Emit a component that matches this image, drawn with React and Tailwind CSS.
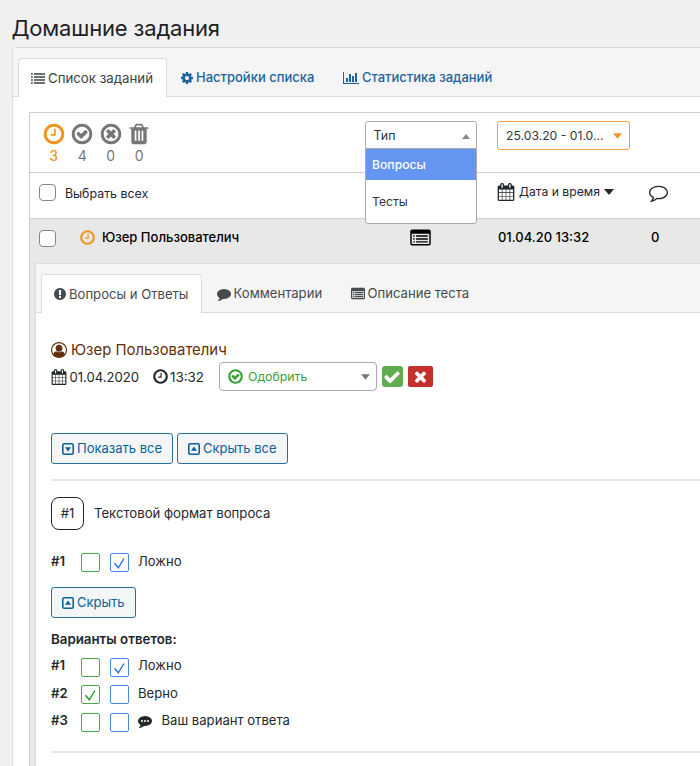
/*
 * Homework admin page
 * -------------------
 * List of submitted tasks with a status filter, a type dropdown and the
 * expanded answer details of a single student.
 */

import clsx from 'clsx'

const RING =
  'M1440 896q0-148-73-273t-198-198-273-73-273 73-198 198-73 273 73 273 198 198 273 73 273-73 198-198 73-273zm224 0q0 209-103 385.5t-279.5 279.5-385.5 103-385.5-103-279.5-279.5-103-385.5 103-385.5 279.5-279.5 385.5-103 385.5 103 279.5 279.5 103 385.5z'

const BUBBLE =
  'M1792 896q0 174-120 321.5t-326 233-450 85.5q-70 0-145-8-198 175-460 242-49 14-114 22-17 2-30.5-9t-17.5-29v-1q-3-4-.5-12t2-10 4.5-9.5l6-9 7-8.5 8-9q7-8 31-34.5t34.5-38 31-39.5 32.5-51 27-59 26-76q-157-89-247.5-220t-90.5-281q0-130 71-248.5t191-204.5 286-136.5 348-50.5q244 0 450 85.5t326 233 120 321.5z'

const PATHS = {
  clock:
    'M1024 544v448q0 14-9 23t-23 9h-320q-14 0-23-9t-9-23v-64q0-14 9-23t23-9h224v-352q0-14 9-23t23-9h64q14 0 23 9t9 23z' + RING,
  checkCircle:
    'M1299 813l-422 422q-19 19-45 19t-45-19l-294-294q-19-19-19-45t19-45l102-102q19-19 45-19t45 19l147 147 275-275q19-19 45-19t45 19l102 102q19 19 19 45t-19 45z' + RING,
  timesCircle:
    'M1257 1113l-146 146q-10 10-23 10t-23-10l-169-169-169 169q-10 10-23 10t-23-10l-146-146q-10-10-10-23t10-23l169-169-169-169q-10-10-10-23t10-23l146-146q10-10 23-10t23 10l169 169 169-169q10-10 23-10t23 10l146 146q10 10 10 23t-10 23l-169 169 169 169q10 10 10 23t-10 23z' + RING,
  trash:
    'M704 1376v-704q0-14-9-23t-23-9h-64q-14 0-23 9t-9 23v704q0 14 9 23t23 9h64q14 0 23-9t9-23zm256 0v-704q0-14-9-23t-23-9h-64q-14 0-23 9t-9 23v704q0 14 9 23t23 9h64q14 0 23-9t9-23zm256 0v-704q0-14-9-23t-23-9h-64q-14 0-23 9t-9 23v704q0 14 9 23t23 9h64q14 0 23-9t9-23zm-544-992h448l-48-117q-7-9-17-11h-317q-10 2-17 11zm928 32v64q0 14-9 23t-23 9h-96v948q0 83-47 143.5t-113 60.5h-832q-66 0-113-58.5t-47-141.5v-952h-96q-14 0-23-9t-9-23v-64q0-14 9-23t23-9h309l70-167q15-37 54-63t79-26h320q40 0 79 26t54 63l70 167h309q14 0 23 9t9 23z',
  calendar:
    'M192 1664h288v-288h-288v288zm352 0h320v-288h-320v288zm-352-352h288v-320h-288v320zm352 0h320v-320h-320v320zm-352-384h288v-288h-288v288zm736 736h320v-288h-320v288zm-384-736h320v-288h-320v288zm768 736h288v-288h-288v288zm-384-352h320v-320h-320v320zm-352-864v-288q0-13-9.5-22.5t-22.5-9.5h-64q-13 0-22.5 9.5t-9.5 22.5v288q0 13 9.5 22.5t22.5 9.5h64q13 0 22.5-9.5t9.5-22.5zm736 864h288v-320h-288v320zm-384-384h320v-288h-320v288zm384 0h288v-288h-288v288zm32-480v-288q0-13-9.5-22.5t-22.5-9.5h-64q-13 0-22.5 9.5t-9.5 22.5v288q0 13 9.5 22.5t22.5 9.5h64q13 0 22.5-9.5t9.5-22.5zm384-64v1280q0 52-38 90t-90 38h-1408q-52 0-90-38t-38-90v-1280q0-52 38-90t90-38h128v-96q0-66 47-113t113-47h64q66 0 113 47t47 113v96h384v-96q0-66 47-113t113-47h64q66 0 113 47t47 113v96h128q52 0 90 38t38 90z',
  list:
    'M0 1304h224v208h-224zM0 920h224v208h-224zM0 536h224v208h-224zM0 152h224v208h-224zM384 1304h1408v208h-1408zM384 920h1408v208h-1408zM384 536h1408v208h-1408zM384 152h1408v208h-1408z',
  cog:
    'M1152 896q0-106-75-181t-181-75-181 75-75 181 75 181 181 75 181-75 75-181zm512-109v222q0 12-8 23t-20 13l-185 28q-19 54-39 91 35 50 107 138 10 12 10 25t-9 23q-27 37-99 108t-94 71q-12 0-26-9l-138-108q-44 23-91 38-16 136-29 186-7 28-36 28h-222q-14 0-24.5-8.5t-11.5-21.5l-28-184q-49-16-90-37l-141 107q-10 9-25 9-14 0-25-11-126-114-165-168-7-10-7-23 0-12 8-23 15-21 51-66.5t54-70.5q-27-50-41-99l-183-27q-13-2-21-12.5t-8-23.5v-222q0-12 8-23t19-13l186-28q14-46 39-92-40-57-107-138-10-12-10-24 0-10 9-23 26-36 98.5-107.5t94.5-71.5q13 0 26 10l138 107q44-23 91-38 16-136 29-186 7-28 36-28h222q14 0 24.5 8.5t11.5 21.5l28 184q49 16 90 37l142-107q9-9 24-9 13 0 25 10 129 119 165 170 7 8 7 22 0 12-8 23-15 21-51 66.5t-54 70.5q26 50 41 98l183 28q13 2 21 12.5t8 23.5z',
  chart:
    'M640 896v512h-256v-512h256zm384-512v1024h-256v-1024h256zm1024 1152v128h-2048v-1536h128v1408h1920zm-640-896v768h-256v-768h256zm384-384v1152h-256v-1152h256z',
  comment: BUBBLE,
  commentOutline:
    'M896 384q-204 0-381.5 69.5t-282 187.5-104.5 255q0 112 71.5 213.5t201.5 175.5l87 50-27 96q-24 91-70 172 152-63 275-171l43-38 57 6q69 8 130 8 204 0 381.5-69.5t282-187.5 104.5-255-104.5-255-282-187.5-381.5-69.5z' + BUBBLE,
  commentDots:
    BUBBLE +
    'M384 896a128 128 0 1 0 256 0a128 128 0 1 0-256 0zM768 896a128 128 0 1 0 256 0a128 128 0 1 0-256 0zM1152 896a128 128 0 1 0 256 0a128 128 0 1 0-256 0z',
  exclamation:
    'M896 128q209 0 385.5 103t279.5 279.5 103 385.5-103 385.5-279.5 279.5-385.5 103-385.5-103-279.5-279.5-103-385.5 103-385.5 279.5-279.5 385.5-103zm128 1247v-190q0-14-9-23.5t-22-9.5h-192q-13 0-23 10t-10 23v190q0 13 10 23t23 10h192q13 0 22-9.5t9-23.5zm-2-344l18-621q0-12-10-18-10-8-24-8h-220q-14 0-24 8-10 6-10 18l17 621q0 10 10 17.5t24 7.5h185q14 0 23.5-7.5t10.5-17.5z',
  listAlt:
    'M160 128h1472q160 0 160 160v1088q0 160-160 160h-1472q-160 0-160-160v-1088q0-160 160-160zM128 512v864q0 32 32 32h1472q32 0 32-32v-864zM256 640h128v128h-128zM256 896h128v128h-128zM256 1152h128v128h-128zM512 640h1024v128h-1024zM512 896h1024v128h-1024zM512 1152h1024v128h-1024z',
  user:
    'M896 0q182 0 348 71t286 191 191 286 71 348q0 181-70.5 347t-190.5 286-286 191.5-349 71.5-349-71-285.5-191.5-190.5-286-71-347.5 71-348 191-286 286-191 348-71zm619 1351q149-205 149-455 0-156-61-298t-164-245-245-164-298-61-298 61-245 164-164 245-61 298q0 250 149 455 66-327 306-327 131 128 313 128t313-128q240 0 306 327zm-235-647q0-159-112.5-271.5t-271.5-112.5-271.5 112.5-112.5 271.5 112.5 271.5 271.5 112.5 271.5-112.5 112.5-271.5z',
  squareDown:
    'M416 128h960q288 0 288 288v960q0 288-288 288h-960q-288 0-288-288v-960q0-288 288-288zM416 330q-86 0-86 86v960q0 86 86 86h960q86 0 86-86v-960q0-86-86-86zM512 672h768l-384 544z',
  squareUp:
    'M416 128h960q288 0 288 288v960q0 288-288 288h-960q-288 0-288-288v-960q0-288 288-288zM416 330q-86 0-86 86v960q0 86 86 86h960q86 0 86-86v-960q0-86-86-86zM512 1120h768l-384-544z',
  check:
    'M1671 566q0 40-28 68l-724 724-136 136q-28 28-68 28t-68-28l-136-136-362-362q-28-28-28-68t28-68l136-136q28-28 68-28t68 28l294 295 656-657q28-28 68-28t68 28l136 136q28 28 28 68z',
  times:
    'M1490 1322q0 40-28 68l-136 136q-28 28-68 28t-68-28l-294-294-294 294q-28 28-68 28t-68-28l-136-136q-28-28-28-68t28-68l294-294-294-294q-28-28-28-68t28-68l136-136q28-28 68-28t68 28l294 294 294-294q28-28 68-28t68 28l136 136q28 28 28 68t-28 68l-294 294 294 294q28 28 28 68z',
}

function Icon({ name, box = '0 0 1792 1792', className }) {
  return (
    <svg viewBox={box} fill="currentColor" fillRule="evenodd" className={clsx('shrink-0', className)}>
      <path d={PATHS[name]} />
    </svg>
  )
}

function Caret({ up, className }) {
  return (
    <svg viewBox="0 0 10 6" fill="currentColor" className={clsx('shrink-0', className)}>
      <path d={up ? 'M0 6L5 0L10 6z' : 'M0 0L5 6L10 0z'} />
    </svg>
  )
}

const filters = [
  { icon: 'clock', count: 3, active: true },
  { icon: 'checkCircle', count: 4 },
  { icon: 'timesCircle', count: 0 },
  { icon: 'trash', count: 0 },
]

const answers = [
  { num: '#1', right: false, chosen: true, text: 'Ложно' },
  { num: '#2', right: true, chosen: false, text: 'Верно' },
  { num: '#3', right: false, chosen: false, text: 'Ваш вариант ответа', custom: true },
]

function SelectBox() {
  return <span className="block size-[17px] rounded-[4px] border border-[#7e8993] bg-white" />
}

function Mark({ checked, className }) {
  return (
    <span className={clsx('flex size-[19px] items-center justify-center rounded-[2px] border', className)}>
      {checked && (
        <svg viewBox="0 0 19 19" fill="none" stroke="currentColor" strokeWidth="1.4" className="size-[19px] shrink-0">
          <path d="M4.5 10.2L8.3 14.8L14 5.5" />
        </svg>
      )}
    </span>
  )
}

function Answer({ num, right, chosen, text, custom }) {
  return (
    <div className="flex h-[27.5px] items-center">
      <span className="w-[30px] text-[13.2px] font-semibold">{num}</span>
      <Mark checked={right} className="mt-[2px] border-[#4ba84f] text-[#249a2c]" />
      <Mark checked={chosen} className="mt-[2px] ml-[9.5px] border-[#4a86e8] text-[#2b6fe0]" />
      {custom && <Icon name="commentDots" className="ml-[9px] size-[14px]" />}
      <span className={clsx('text-[13.1px]', custom ? 'ml-[10px]' : 'ml-[9.5px]')}>{text}</span>
    </div>
  )
}

function BlueButton({ icon, className, children }) {
  return (
    <button
      type="button"
      className={clsx(
        'flex h-[31px] items-center gap-[2px] rounded-[3px] border border-[#2271a1] bg-[#f3f5f6] pt-px pl-[9px] text-[13px] text-[#0b6199]',
        className
      )}
    >
      <Icon name={icon} className="size-[14px]" />
      <span>{children}</span>
    </button>
  )
}

function PageTabs() {
  return (
    <nav className="flex h-[49px] rounded-tl-[4px] border-b border-[#dcdcdc] bg-[#f5f5f5] pl-[5px]">
      <div className="mt-[10px] flex h-[39px] w-[149px] items-center rounded-t-[4px] border border-b-0 border-[#dcdcdc] bg-white pl-[12px] text-[13.25px] text-[#3c4146]">
        <Icon name="list" box="0 0 1792 1664" className="h-[13px] w-[14px]" />
        <span className="ml-[3px] pt-px">Список заданий</span>
      </div>
      <div className="mt-[10px] ml-[13px] flex h-[39px] w-[163px] items-center text-[13px] font-medium text-[#1b659b]">
        <Icon name="cog" className="size-[14px]" />
        <span className="ml-[2px] pt-px">Настройки списка</span>
      </div>
      <div className="mt-[10px] flex h-[39px] items-center text-[13px] font-medium text-[#1b659b]">
        <Icon name="chart" box="0 0 2048 1792" className="h-[14px] w-[16px]" />
        <span className="ml-[3px] pt-px">Статистика заданий</span>
      </div>
    </nav>
  )
}

function TypeSelect() {
  return (
    <div className="relative h-[28px] w-[112.5px]">
      <div className="flex h-[28px] items-center justify-between rounded-t-[3px] border border-[#aaa] bg-white pt-[3px] pr-[6px] pl-[8px] text-[12.5px] text-[#32373c]">
        <span>Тип</span>
        <Caret up className="h-[5px] w-[8px] text-[#888]" />
      </div>
      <ul className="absolute top-[27px] left-0 z-10 h-[75.5px] w-[112.5px] rounded-b-[3px] border border-[#aaa] bg-white text-[12.2px]">
        <li className="flex h-[31px] items-center bg-[#6495f0] pt-[2px] pl-[6.5px] font-medium text-white">Вопросы</li>
        <li className="flex h-[43px] items-center pt-px pl-[6.5px] text-[#32373c]">Тесты</li>
      </ul>
    </div>
  )
}

function FilterRow() {
  return (
    <div className="flex h-[60px] border-b border-[#ccd0d4] pl-[9.5px]">
      <div className="flex w-[325px]">
        {filters.map(({ icon, count, active }) => (
          <div
            key={icon}
            className={clsx(
              'flex w-[28.5px] flex-col items-center pt-[9px]',
              active ? 'text-[#ef9521]' : 'text-[#777]'
            )}
          >
            <Icon name={icon} className="size-[24px]" />
            <span className={clsx('pt-px text-[14px] leading-[18px]', active && 'font-medium')}>{count}</span>
          </div>
        ))}
      </div>
      <div className="pt-[8px]">
        <TypeSelect />
      </div>
      <div className="mt-[8px] ml-[20px] flex h-[29px] w-[133px] items-center justify-between rounded-[3px] border border-[#f0a040] bg-white pr-[7px] pl-[8px] text-[12.2px] text-[#32373c]">
        <span className="pt-[2px]">25.03.20 - 01.0...</span>
        <Caret className="h-[6px] w-[9px] text-[#ef9521]" />
      </div>
    </div>
  )
}

function DetailTabs() {
  return (
    <nav className="flex h-[49px] border-b border-[#dcdcdc] bg-[#f5f5f5] pl-[5px] text-[13.1px] text-[#464b50]">
      <div className="mt-[10px] flex h-[39px] w-[160.5px] items-center rounded-t-[4px] border border-b-0 border-[#dcdcdc] bg-white pl-[11px]">
        <Icon name="exclamation" className="size-[14px]" />
        <span className="ml-[2px] pt-px">Вопросы и Ответы</span>
      </div>
      <div className="mt-[10px] ml-[15px] flex h-[39px] w-[134px] items-center">
        <Icon name="comment" className="size-[14px]" />
        <span className="ml-[3px] pt-px">Комментарии</span>
      </div>
      <div className="mt-[10px] flex h-[39px] items-center">
        <Icon name="listAlt" box="0 0 1792 1664" className="h-[13px] w-[14px] rounded-[2px] bg-[#c4c5c6]" />
        <span className="ml-[3px] pt-px">Описание теста</span>
      </div>
    </nav>
  )
}

function Details() {
  return (
    <div className="ml-[5px] h-[520px] border-t border-l border-[#dcdcdc] bg-white">
      <DetailTabs />
      <div className="flex flex-col pl-[15px]">
        <div className="mt-[26px] flex h-[22px] items-center text-[14.9px] text-[#632f0a]">
          <Icon name="user" className="size-[16px]" />
          <span className="ml-[4px] pt-px">Юзер Пользователич</span>
        </div>
        <div className="flex h-[31px] items-center text-[13.1px]">
          <Icon name="calendar" className="size-[16px]" />
          <span className="ml-[2.5px] w-[82px] pt-[2px]">01.04.2020</span>
          <Icon name="clock" className="size-[17px]" />
          <span className="ml-[1.5px] w-[49px] pt-[2px] text-[13.4px]">13:32</span>
          <div className="flex h-[29px] w-[158px] items-center rounded-[4px] border border-[#aaa] pr-[6px] pl-[7px] text-[12.3px] text-[#3c9f37]">
            <Icon name="checkCircle" className="size-[17px]" />
            <span className="ml-[4px] flex-1 pt-[2px]">Одобрить</span>
            <Caret className="h-[6px] w-[9px] text-[#777]" />
          </div>
          <span className="ml-[4.5px] flex size-[21px] items-center justify-center rounded-[3px] bg-[#5fac51] text-white">
            <Icon name="check" className="size-[18px]" />
          </span>
          <span className="ml-[5.5px] flex h-[21px] w-[25px] items-center justify-center rounded-[2px] bg-[#c4302b] text-white">
            <Icon name="times" className="size-[17px]" />
          </span>
        </div>
        <div className="mt-[41px] flex gap-[4px]">
          <BlueButton icon="squareDown" className="w-[122px]">Показать все</BlueButton>
          <BlueButton icon="squareUp" className="w-[111px]">Скрыть все</BlueButton>
        </div>
        <div className="mt-[15px] h-[2px] bg-[#e7e7e7]" />
        <div className="mt-[16px] flex h-[33px] items-center">
          <span className="flex size-[33px] items-center justify-center rounded-[8px] border border-[#222] text-[13px]">#1</span>
          <span className="ml-[10px] pt-px text-[13.15px]">Текстовой формат вопроса</span>
        </div>
        <div className="mt-[18px]">
          <Answer num="#1" chosen text="Ложно" />
        </div>
        <BlueButton icon="squareUp" className="mt-[11px] w-[85px]">Скрыть</BlueButton>
        <p className="mt-[11px] text-[13.3px] leading-[20px] font-semibold">Варианты ответов:</p>
        <div className="mt-[4px]">
          {answers.map((a) => (
            <Answer key={a.num} {...a} />
          ))}
        </div>
        <div className="mt-[16px] h-[2px] bg-[#e7e7e7]" />
      </div>
    </div>
  )
}

export default function App() {
  return (
    <div className="h-[766px] w-[700px] overflow-hidden bg-[#f0f0f0] font-['Inter',sans-serif] whitespace-nowrap text-[#23282d]">
      <h1 className="ml-[11.5px] h-[47px] pt-[13px] text-[22px] leading-[30px] tracking-[-0.18px] text-[#1d2125]">Домашние задания</h1>
      <div className="ml-[12px] h-[730px] w-[720px] rounded-tl-[4px] border border-[#dcdcdc] bg-white">
        <PageTabs />
        <div className="mt-[15px] ml-[16px] h-[680px] border border-[#ccd0d4]">
          <FilterRow />
          <div className="flex h-[46px] items-center border-b border-[#ccd0d4] pb-[6px] pl-[9.4px]">
            <div className="flex w-[458px] items-center">
              <SelectBox />
              <span className="ml-[8.5px] pt-[4px] text-[12.4px]">Выбрать всех</span>
            </div>
            <div className="flex w-[152px] items-center">
              <Icon name="calendar" className="size-[18px]" />
              <span className="ml-[3.5px] text-[12.2px]">Дата и время</span>
              <Caret className="ml-[4px] h-[6px] w-[10px]" />
            </div>
            <Icon name="commentOutline" className="size-[19px]" />
          </div>
          <div className="bg-[#e8e8e8]">
            <div className="flex h-[44px] items-center pb-[6px] pl-[9.4px] text-[13px] font-medium text-black">
              <SelectBox />
              <Icon name="clock" className="mb-[2px] ml-[23px] size-[17px] text-[#ef9521]" />
              <span className="ml-[5.5px] w-[308.5px] pb-px">Юзер Пользователич</span>
              <Icon name="listAlt" box="0 0 1792 1664" className="mb-[2px] h-[19px] w-[21px]" />
              <span className="ml-[66.5px] w-[153px] pb-px">01.04.20 13:32</span>
              <span className="pb-px">0</span>
            </div>
            <Details />
          </div>
        </div>
      </div>
    </div>
  )
}
